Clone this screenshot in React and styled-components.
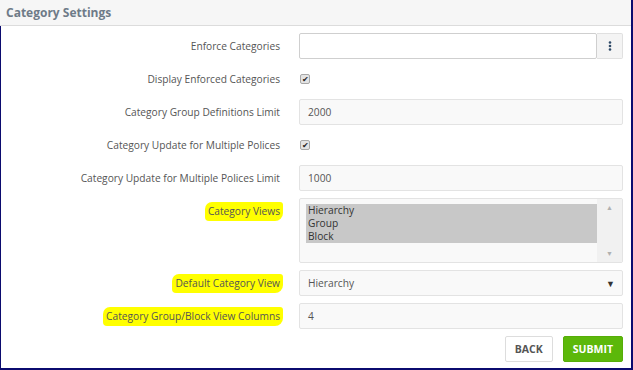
// Packages
import React from "react"
import styled, { createGlobalStyle } from "styled-components"

// Styles
const GlobalStyle = createGlobalStyle`
    html, body {
        margin: 0;
        padding: 0;
        background: #ffffff;
    }

    * {
        box-sizing: border-box;
    }
`

const Panel = styled.div`
    width: 633px;
    height: 370px;
    display: flex;
    flex-direction: column;
    border-right: 2px solid #0b0b6f;
    border-bottom: 2px solid #0b0b6f;
    font-family: "Open Sans", "Liberation Sans", sans-serif;
    font-size: 10.2px;
    color: #555;
`

const Header = styled.div`
    height: 26px;
    flex-shrink: 0;
    display: flex;
    align-items: center;
    padding-left: 6px;
    background: #f6f6f6;
    border-bottom: 1px solid #dcdcdc;
`

const Title = styled.h2`
    margin: 0;
    font-size: 12px;
    font-weight: 700;
    color: #6e7b88;
`

const Body = styled.div`
    flex: 1;
    border-left: 1px solid #0b0b6f;
    padding: 7px 8px 0 0;
`

const Form = styled.div`
    display: grid;
    grid-template-columns: 279px 1fr;
    column-gap: 19px;
    row-gap: 7px;
`

const Label = styled.div`
    display: flex;
    justify-content: flex-end;
    align-items: flex-start;
    line-height: 26px;
    white-space: nowrap;
`

const Highlight = styled.span`
    line-height: 17px;
    margin-top: 4px;
    padding: 1px 3px;
    margin-right: -3px;
    background: ${props => (props.$on ? "#ffff00" : "transparent")};
    border-radius: 7px 3px 8px 4px;
`

const Field = styled.div`
    display: flex;
    align-items: center;
    min-height: 26px;
`

const Input = styled.div`
    flex: 1;
    height: 26px;
    display: flex;
    align-items: center;
    padding-left: 8px;
    background: ${props => (props.$white ? "#ffffff" : "#f9f9f9")};
    border: 1px solid ${props => (props.$white ? "#cfcfcf" : "#e3e3e3")};
    border-radius: 2px;
    color: #555;
`

const MenuButton = styled.div`
    width: 26px;
    height: 26px;
    display: flex;
    align-items: center;
    justify-content: center;
    background: #f4f4f4;
    border: 1px solid #e0e0e0;
    border-left: none;
    border-radius: 0 2px 2px 0;
`

const Check = styled.span`
    width: 10px;
    height: 10px;
    margin-left: 1px;
    display: flex;
    align-items: center;
    justify-content: center;
    background: #e4e4e4;
    border: 1px solid #a8a8a8;
    border-radius: 2px;
    font-size: 8px;
    line-height: 1;
    color: #222;
`

const ListBox = styled.div`
    flex: 1;
    height: 65px;
    display: flex;
    background: #f9f9f9;
    border: 1px solid #e3e3e3;
    border-radius: 2px;
`

const Options = styled.div`
    flex: 1;
    padding: 5px 0 0 6px;
`

const Option = styled.div`
    height: 13px;
    line-height: 13px;
    padding-left: 2px;
    background: #c8c8c8;
    color: #333;
`

const ScrollBar = styled.div`
    width: 25px;
    display: flex;
    flex-direction: column;
    justify-content: space-between;
    align-items: center;
    padding: 4px 0 4px;
    background: #f1f1f1;
    font-size: 7px;
    color: #b0b0b0;
`

const Arrow = styled.span`
    margin-left: auto;
    margin-right: 7px;
    font-size: 9px;
    color: #333;
`

const Actions = styled.div`
    grid-column: 2;
    display: flex;
    justify-content: flex-end;
    gap: 10px;
`

const Button = styled.button`
    height: 26px;
    padding: 0 ${props => (props.$primary ? "9px" : "9px")};
    font-family: "Open Sans", "Liberation Sans", sans-serif;
    font-size: 10.5px;
    font-weight: 700;
    color: ${props => (props.$primary ? "#ffffff" : "#555")};
    background: ${props => (props.$primary ? "#5cb80a" : "#ffffff")};
    border: 1px solid ${props => (props.$primary ? "#56ad08" : "#dddddd")};
    border-radius: 2px;
`

function Kebab() {
    return (
        <svg width="4" height="10" viewBox="0 0 4 10">
            <circle cx="2" cy="1.5" r="1.3" fill="#2f4a68" />
            <circle cx="2" cy="5" r="1.3" fill="#2f4a68" />
            <circle cx="2" cy="8.5" r="1.3" fill="#2f4a68" />
        </svg>
    )
}

const rows = [
    { label: "Enforce Categories", kind: "enforce" },
    { label: "Display Enforced Categories", kind: "check" },
    { label: "Category Group Definitions Limit", kind: "input", value: "2000" },
    { label: "Category Update for Multiple Polices", kind: "check" },
    { label: "Category Update for Multiple Polices Limit", kind: "input", value: "1000" },
    { label: "Category Views", kind: "list", marked: true },
    { label: "Default Category View", kind: "select", value: "Hierarchy", marked: true },
    { label: "Category Group/Block View Columns", kind: "input", value: "4", marked: true },
]

function renderField(row) {
    switch (row.kind) {
        case "enforce":
            return (
                <>
                    <Input $white />
                    <MenuButton>
                        <Kebab />
                    </MenuButton>
                </>
            )
        case "check":
            return <Check>✔</Check>
        case "list":
            return (
                <ListBox>
                    <Options>
                        {["Hierarchy", "Group", "Block"].map(o => (
                            <Option key={o}>{o}</Option>
                        ))}
                    </Options>
                    <ScrollBar>
                        <span>▲</span>
                        <span>▼</span>
                    </ScrollBar>
                </ListBox>
            )
        case "select":
            return (
                <Input>
                    {row.value}
                    <Arrow>▼</Arrow>
                </Input>
            )
        default:
            return <Input>{row.value}</Input>
    }
}

function App() {
    return (
        <Panel>
            <GlobalStyle />
            <Header>
                <Title>Category Settings</Title>
            </Header>

            <Body>
                <Form>
                    {rows.map(row => (
                        <React.Fragment key={row.label}>
                            <Label>
                                <Highlight $on={row.marked}>{row.label}</Highlight>
                            </Label>
                            <Field>{renderField(row)}</Field>
                        </React.Fragment>
                    ))}

                    <Actions>
                        <Button>BACK</Button>
                        <Button $primary>SUBMIT</Button>
                    </Actions>
                </Form>
            </Body>
        </Panel>
    )
}

export default App
